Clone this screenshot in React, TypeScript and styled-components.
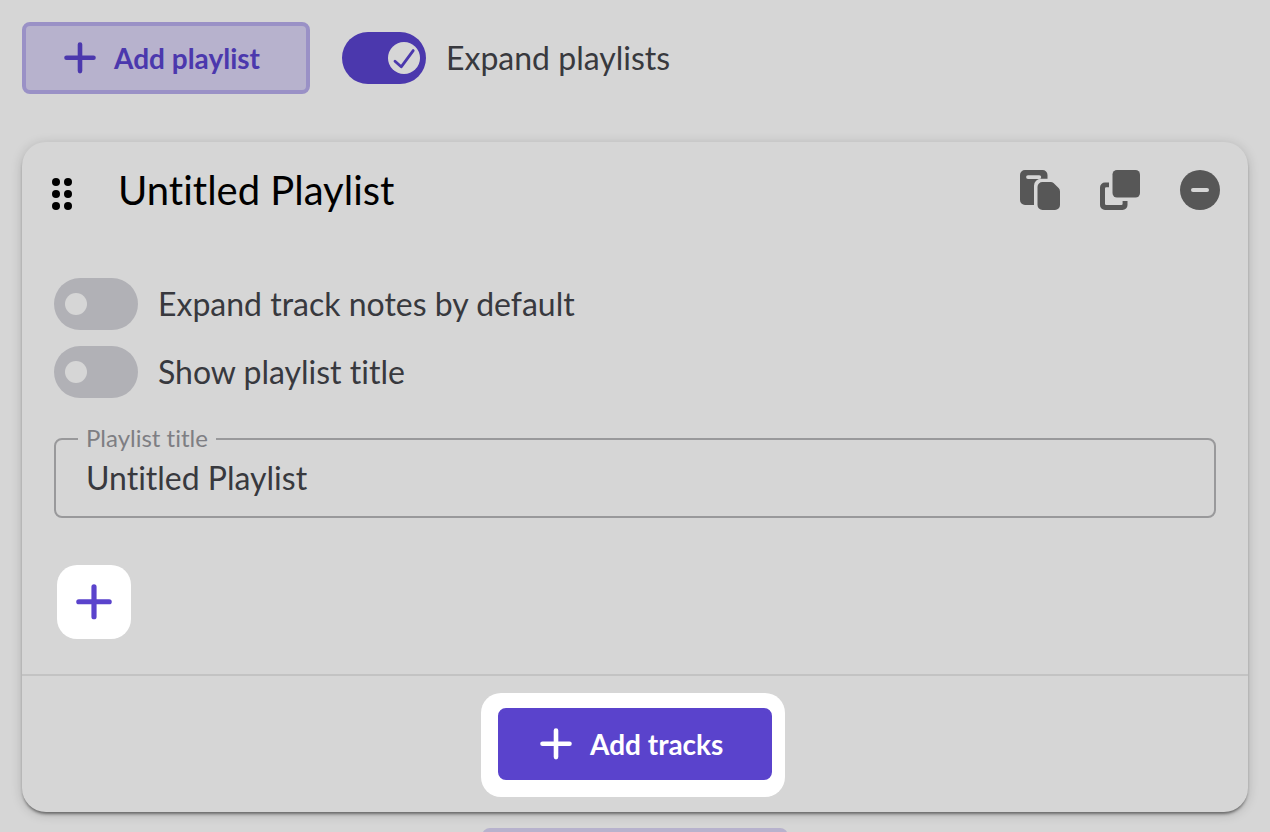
import React, { useId, useState } from "react";
import styled, { createGlobalStyle, css } from "styled-components";

const color = {
  page: "#d6d6d6",
  accent: "#5a43cc",
  accentDim: "#4b38ad",
  text: "#38393e",
  muted: "#7e7e83",
  line: "#99999b",
  icon: "#575757",
  off: "#b1b1b6",
  soft: "#b7b2cd",
  softLine: "#9a91c6",
};

const GlobalStyle = createGlobalStyle`
  *, *::before, *::after { box-sizing: border-box; }
  body {
    margin: 0;
    background: ${color.page};
    color: ${color.text};
    font-family: Lato, "Open Sans", sans-serif;
    font-variant-ligatures: none;
  }
  button, input {
    margin: 0;
    font-family: inherit;
    font-variant-ligatures: inherit;
  }
`;

const Page = styled.main`
  height: 100vh;
  overflow: hidden;
  padding: 22px 22px 0;
  display: flex;
  flex-direction: column;
`;

const Toolbar = styled.div`
  display: flex;
  align-items: center;
  gap: 32px;
  flex: none;
`;

const Button = styled.button<{ $primary?: boolean }>`
  display: flex;
  align-items: center;
  gap: 18px;
  height: 72px;
  min-width: ${(p) => (p.$primary ? "274px" : "288px")};
  padding: 0 44px 0 38px;
  border: 4px solid ${(p) => (p.$primary ? color.accent : color.softLine)};
  border-radius: 8px;
  background: ${(p) => (p.$primary ? color.accent : color.soft)};
  color: ${(p) => (p.$primary ? "#fff" : color.accentDim)};
  font-size: 28px;
  line-height: 36px;
  font-weight: 700;
  cursor: pointer;
`;

const ToggleRow = styled.label`
  display: flex;
  align-items: center;
  gap: 20px;
  font-size: 32px;
  line-height: 40px;
  cursor: pointer;
`;

const Switch = styled.span`
  position: relative;
  display: flex;
`;

const SwitchInput = styled.input`
  appearance: none;
  width: 84px;
  height: 52px;
  border-radius: 26px;
  background: ${color.off};
  cursor: pointer;

  &:checked {
    background: ${color.accentDim};
  }
`;

const Knob = styled.span<{ $on: boolean }>`
  position: absolute;
  border-radius: 50%;
  background: ${color.page};
  pointer-events: none;
  ${(p) =>
    p.$on
      ? css`
          top: 10px;
          right: 6px;
          width: 32px;
          height: 32px;
        `
      : css`
          top: 15px;
          left: 11px;
          width: 22px;
          height: 22px;
        `}

  svg {
    display: block;
  }
`;

const Card = styled.section`
  flex: none;
  margin-top: 48px;
  border-radius: 24px;
  background: ${color.page};
  box-shadow:
    0 3px 3px -1px rgba(0, 0, 0, 0.45),
    0 2px 12px rgba(0, 0, 0, 0.18);
`;

const CardHeader = styled.header`
  display: flex;
  align-items: center;
  height: 96px;
  padding: 0 28px 0 30px;
`;

const Title = styled.h2`
  flex: 1;
  margin: 0 0 0 42px;
  color: #000;
  font-size: 40px;
  line-height: 48px;
  font-weight: 400;
`;

const Actions = styled.div`
  display: flex;
  gap: 40px;
`;

const IconButton = styled.button`
  display: flex;
  padding: 0;
  border: 0;
  background: none;
  color: ${color.icon};
  cursor: pointer;
`;

const DragHandle = styled(IconButton)`
  margin-top: 8px;
  color: #000;
  cursor: grab;
`;

const CardBody = styled.div`
  display: flex;
  flex-direction: column;
  align-items: stretch;
  padding: 40px 32px 35px;
`;

const Toggles = styled.div`
  display: flex;
  flex-direction: column;
  align-items: flex-start;
  gap: 16px;
`;

const Field = styled.fieldset`
  margin: 29px 0 0;
  padding: 0 0 13px;
  border: 2px solid ${color.line};
  border-radius: 8px;
`;

const FieldLegend = styled.legend`
  margin-left: 22px;
  padding: 0 8px 2px;
  color: ${color.muted};
  font-size: 24px;
  line-height: 22px;
`;

const FieldInput = styled.input`
  display: block;
  width: 100%;
  height: 52px;
  padding: 0 30px;
  border: 0;
  outline: 0;
  background: none;
  color: ${color.text};
  font-size: 32px;
`;

const SquareButton = styled.button`
  display: flex;
  align-items: center;
  justify-content: center;
  width: 74px;
  height: 74px;
  margin: 47px 0 0 3px;
  padding: 0;
  border: 0;
  border-radius: 20px;
  background: #fff;
  color: ${color.accent};
  cursor: pointer;
`;

const CardFooter = styled.footer`
  display: flex;
  justify-content: center;
  padding: 17px 4px 15px 0;
  border-top: 2px solid #c3c3c3;
`;

const Spotlight = styled.div`
  padding: 15px 13px 17px 17px;
  border-radius: 20px;
  background: #fff;
`;

const NextButton = styled(Button)`
  flex: none;
  align-self: center;
  width: 306px;
  margin-top: 16px;
  border-color: ${color.soft};
`;

function PlusIcon({ size = 32 }: { size?: number }) {
  return (
    <svg width={size} height={size} viewBox="0 0 32 32" fill="none" stroke="currentColor" strokeWidth="4.6" strokeLinecap="round" aria-hidden="true">
      <path d="M16 2.5v26.6M2.500 15.800h27" />
    </svg>
  );
}

function DragIcon() {
  return (
    <svg width="24" height="34" viewBox="0 0 24 34" fill="currentColor" aria-hidden="true">
      {[5, 17, 29].map((y) => (
        <React.Fragment key={y}>
          <circle cx="4" cy={y} r="4" />
          <circle cx="16" cy={y} r="4" />
        </React.Fragment>
      ))}
    </svg>
  );
}

function PasteIcon() {
  return (
    <svg width="40" height="40" viewBox="0 0 40 40" fill="currentColor" aria-hidden="true">
      <path
        fillRule="evenodd"
        d="M5 0h17.5a5 5 0 0 1 5 5v3.8H21a7 7 0 0 0-7 7V35H5a5 5 0 0 1-5-5V5a5 5 0 0 1 5-5Zm3 5.200a1.900 1.900 0 0 0 0 3.800h11.300a1.900 1.900 0 0 0 0-3.800Z"
      />
      <path d="M22.500 12h8.200a4 4 0 0 1 2.800 1.100l5.100 5a4.600 4.600 0 0 1 1.400 3.300V35a5 5 0 0 1-5 5H22.500a5 5 0 0 1-5-5V17a5 5 0 0 1 5-5Z" />
    </svg>
  );
}

function CopyIcon() {
  return (
    <svg width="40" height="40" viewBox="0 0 40 40" fill="currentColor" aria-hidden="true">
      <rect x="12.5" width="27.5" height="27.5" rx="4.5" />
      <path d="M9 12.500v4.700H6.200A1.200 1.200 0 0 0 5 18.400V33.800A1.200 1.200 0 0 0 6.200 35H21.400A1.200 1.200 0 0 0 22.600 33.800V31H27.500V35a5 5 0 0 1-5 5H5a5 5 0 0 1-5-5V17.500a5 5 0 0 1 5-5Z" />
    </svg>
  );
}

function RemoveIcon() {
  return (
    <svg width="40" height="40" viewBox="0 0 40 40" aria-hidden="true">
      <circle cx="20" cy="20" r="20" fill="currentColor" />
      <path d="M13 20h14" stroke={color.page} strokeWidth="4" strokeLinecap="round" />
    </svg>
  );
}

function Toggle({ label, defaultOn = false }: { label: string; defaultOn?: boolean }) {
  const [on, setOn] = useState(defaultOn);
  return (
    <ToggleRow>
      <Switch>
        <SwitchInput type="checkbox" role="switch" checked={on} onChange={() => setOn(!on)} />
        <Knob $on={on}>
          {on && (
            <svg width="32" height="32" viewBox="0 0 32 32" fill="none" stroke={color.accentDim} strokeWidth="2.8" strokeLinecap="round" strokeLinejoin="round" aria-hidden="true">
              <path d="M7 19.200l6.200 5.600L25.200 8.600" />
            </svg>
          )}
        </Knob>
      </Switch>
      {label}
    </ToggleRow>
  );
}

export default function App() {
  const titleId = useId();
  const [title, setTitle] = useState("Untitled Playlist");
  return (
    <>
      <GlobalStyle />
      <Page>
        <Toolbar>
          <Button type="button">
            <PlusIcon />
            Add playlist
          </Button>
          <Toggle label="Expand playlists" defaultOn />
        </Toolbar>

        <Card>
          <CardHeader>
            <DragHandle type="button" aria-label="Move playlist">
              <DragIcon />
            </DragHandle>
            <Title>{title}</Title>
            <Actions>
              <IconButton type="button" aria-label="Paste">
                <PasteIcon />
              </IconButton>
              <IconButton type="button" aria-label="Duplicate">
                <CopyIcon />
              </IconButton>
              <IconButton type="button" aria-label="Remove">
                <RemoveIcon />
              </IconButton>
            </Actions>
          </CardHeader>

          <CardBody>
            <Toggles>
              <Toggle label="Expand track notes by default" />
              <Toggle label="Show playlist title" />
            </Toggles>
            <Field>
              <FieldLegend>
                <label htmlFor={titleId}>Playlist title</label>
              </FieldLegend>
              <FieldInput id={titleId} type="text" value={title} onChange={(e) => setTitle(e.target.value)} />
            </Field>
            <SquareButton type="button" aria-label="Add track">
              <PlusIcon size={36} />
            </SquareButton>
          </CardBody>

          <CardFooter>
            <Spotlight>
              <Button type="button" $primary>
                <PlusIcon />
                Add tracks
              </Button>
            </Spotlight>
          </CardFooter>
        </Card>

        <NextButton type="button" aria-label="Add playlist" />
      </Page>
    </>
  );
}
